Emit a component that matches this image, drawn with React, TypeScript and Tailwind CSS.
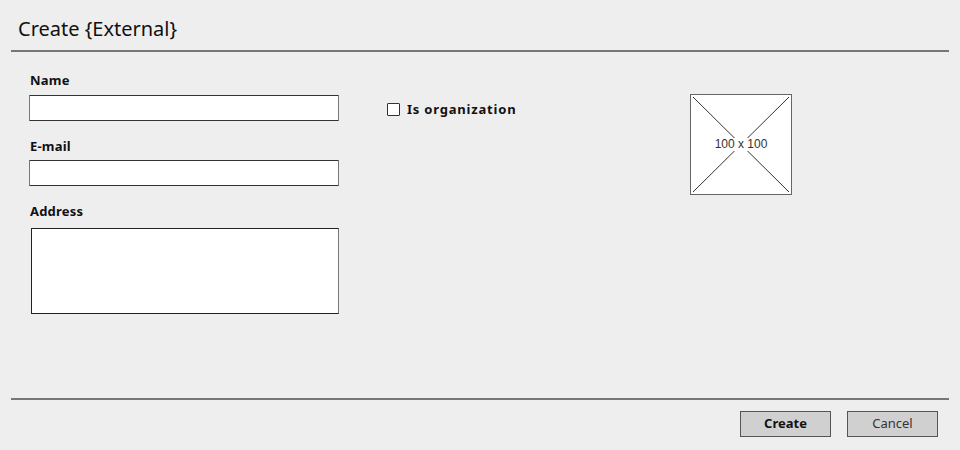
import React from "react";

const font = { fontFamily: "'Comic Sans MS', 'Noto Sans', 'DejaVu Sans', sans-serif" };

export default function App() {
  return (
    <div className="w-[960px] h-[450px] bg-[#eeeeee] flex flex-col text-[#111]" style={font}>
      <div className="h-[50px] pl-[18px] pt-[16px]">
        <div className="text-[20px] leading-[26px] text-[#111]">Create {"{External}"}</div>
      </div>
      <div className="mx-[11px] h-[2px] bg-[#777]" />
      <div className="flex-1 flex flex-row pl-[29px]">
        <div className="w-[310px] flex flex-col pt-[19px]">
          <div className="h-[18px] leading-[18px] text-[13px] font-bold ml-[1px] tracking-[0.2px]">Name</div>
          <div className="mt-[6px] h-[26px] bg-white border border-[#333] border-l-[#777] border-r-[#777] rounded-[1px]" />
          <div className="mt-[16px] h-[18px] leading-[18px] text-[13px] font-bold ml-[1px] tracking-[0.2px]">E-mail</div>
          <div className="mt-[5px] h-[26px] bg-white border border-[#333] border-l-[#777] border-r-[#777] rounded-[1px]" />
          <div className="mt-[16px] h-[18px] leading-[18px] text-[13px] font-bold ml-[1px] tracking-[0.2px]">Address</div>
          <div className="mt-[8px] ml-[2px] h-[86px] bg-white border border-[#222] border-r-[#777]" />
        </div>
        <div className="w-[303px] ml-[48px] pt-[49px]">
          <div className="flex flex-row items-center">
            <div className="w-[13px] h-[13px] bg-white border border-[#333] rounded-[1px]" />
            <div className="ml-[7px] text-[13px] font-bold leading-[16px] tracking-[0.8px]">Is organization</div>
          </div>
        </div>
        <div className="pt-[42px]">
          <div className="relative w-[102px] h-[101px] bg-white border border-[#666] flex items-center justify-center">
            <svg className="absolute inset-0" width="100" height="99" viewBox="0 0 100 99">
              <line x1="2" y1="2" x2="98" y2="97" stroke="#333" strokeWidth="1" />
              <line x1="98" y1="2" x2="2" y2="97" stroke="#333" strokeWidth="1" />
            </svg>
            <span
              className="relative bg-white text-[12px] leading-[13px] text-[#333] px-[1px]"
              style={{ fontFamily: "'Liberation Sans', Arial, sans-serif" }}
            >
              100 x 100
            </span>
          </div>
        </div>
      </div>
      <div className="mx-[11px] h-[2px] bg-[#777]" />
      <div className="h-[50px] flex flex-row justify-end items-start pt-[11px] pr-[22px] gap-[16px]">
        <div className="w-[91px] h-[26px] bg-[#d0d0d0] border border-[#555] flex items-center justify-center text-[13px] font-bold">
          Create
        </div>
        <div className="w-[91px] h-[26px] bg-[#d0d0d0] border border-[#555] flex items-center justify-center text-[13px] text-[#333]">
          Cancel
        </div>
      </div>
    </div>
  );
}
